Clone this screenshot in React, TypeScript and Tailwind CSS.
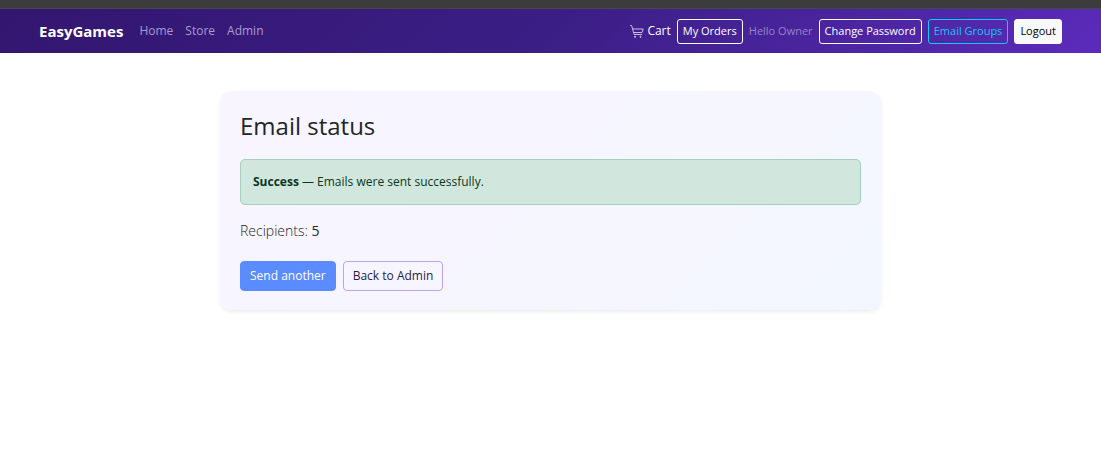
import type { ReactNode } from "react";

function CartIcon() {
  return (
    <svg
      className="h-3.5 w-3.5 text-[#c9bde6]"
      viewBox="0 0 14 14"
      fill="none"
      stroke="currentColor"
      strokeWidth="1"
      aria-hidden="true"
    >
      <path d="M0.2 1.5H1.6L4.2 10.5H12.2" />
      <path d="M2.6 5H13.2L12 8.5H3.6" />
      <circle cx="5" cy="12.8" r="0.6" fill="currentColor" />
      <circle cx="10.5" cy="12.8" r="0.6" fill="currentColor" />
    </svg>
  );
}

function NavLink({ href, children }: { href: string; children: ReactNode }) {
  return (
    <a href={href} className="text-[#a99bcf] hover:text-white">
      {children}
    </a>
  );
}

const smallButton =
  "flex h-[25px] items-center whitespace-nowrap rounded-[3px] border px-[5px] text-[11px]";

export default function App() {
  return (
    <div className="min-h-screen bg-white font-['Open_Sans','Noto_Sans',sans-serif] text-[#212529]">
      <div className="h-[9px] border-b border-[#474747] bg-[#3c3c3c]" />
      <header className="flex h-11 items-center justify-between bg-linear-135 from-[#32166f] via-[#3b1e85] to-[#5b2bbb] px-[39px]">
        <nav className="flex items-center gap-3 text-[12px]">
          <a href="#home" className="mr-1 text-[15px] font-bold text-white">
            EasyGames
          </a>
          <NavLink href="#home">Home</NavLink>
          <NavLink href="#store">Store</NavLink>
          <NavLink href="#admin">Admin</NavLink>
        </nav>
        <div className="flex items-center gap-1.5">
          <a href="#cart" className="flex items-center gap-[3px] text-[12px] font-medium text-white">
            <CartIcon />
            Cart
          </a>
          <a href="#orders" className={`${smallButton} border-white text-white`}>
            My Orders
          </a>
          <span className="whitespace-nowrap text-[11px] text-[#9483c6]">Hello Owner</span>
          <a href="#password" className={`${smallButton} border-white text-white`}>
            Change Password
          </a>
          <a href="#groups" className={`${smallButton} border-[#0dcaf0] text-[#0dcaf0]`}>
            Email Groups
          </a>
          <button type="button" className={`${smallButton} border-[#f8f9fa] bg-[#f8f9fa] text-black`}>
            Logout
          </button>
        </div>
      </header>

      <main className="px-5 pt-[38px]">
        <section className="mx-auto max-w-[661px] rounded-xl bg-linear-135 from-[#f8f5ff] via-[#f6f6ff] via-60% to-[#f2f7ff] px-5 py-[19px] shadow-[0_2px_4px_rgba(0,0,0,0.075)]">
          <h1 className="text-[24px] leading-8 font-medium">Email status</h1>
          <div
            role="status"
            className="mt-[17px] flex h-[46px] items-center rounded-[5px] border border-[#a3cfbb] bg-[#d1e7dd] px-3 text-[12px] text-[#0a3622]"
          >
            <p>
              <strong className="font-bold">Success</strong> — Emails were sent successfully.
            </p>
          </div>
          <p className="mt-3.5 text-[14px] leading-6 font-light">
            Recipients: <span className="font-normal">5</span>
          </p>
          <div className="mt-[18px] flex gap-[7px]">
            <button
              type="button"
              className="h-[30px] rounded-[4px] border border-[#5b8cff] bg-[#5b8cff] px-[9px] text-[12px] font-medium text-white"
            >
              Send another
            </button>
            <a
              href="#admin"
              className="flex h-[30px] items-center rounded-[4px] border border-[#bfa2f3] px-[9px] text-[12px] text-[#2a1a4a]"
            >
              Back to Admin
            </a>
          </div>
        </section>
      </main>
    </div>
  );
}
